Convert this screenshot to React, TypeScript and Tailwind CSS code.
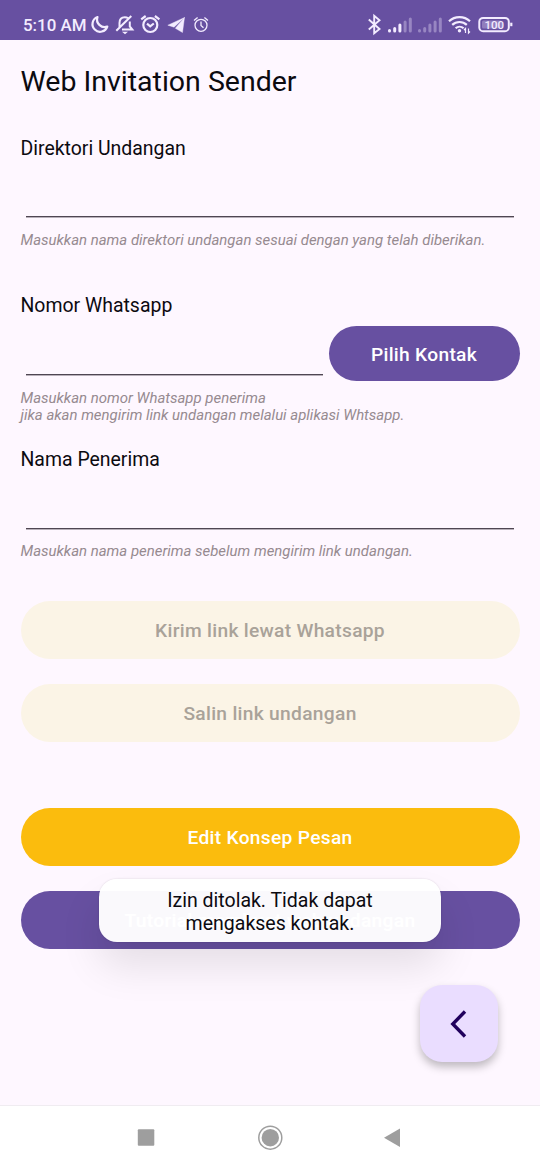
import React from "react";

function StatusBar() {
  return (
    <header className="flex h-10 shrink-0 bg-[#6750a1] text-[#f3ecff]">
      <div className="flex flex-1 pl-[23px]">
        <span className="w-[67px] pt-[15px] text-[16.900px] leading-5 font-medium whitespace-nowrap">5:10 AM</span>
        <svg className="shrink-0" width="120" height="40" viewBox="90 0 120 40" fill="none" stroke="currentColor" strokeWidth="2.200">
          <path d="M97.500 17a7.600 7.600 0 1 0 9.800 9.600 7.600 7.600 0 0 1-9.800-9.600Z" strokeLinejoin="round" />
          <path d="M119.500 27.500V23c0-3.500 2-5.800 5.300-5.800 1.400 0 2.500.4 3.400 1.100M129.800 21.500v5l2.500 3.100H122M116.300 30.800 131.300 16" strokeWidth="2" />
          <path d="M122 31.800h6l-3 2.400Z" fill="currentColor" stroke="none" />
          <circle cx="150.300" cy="25" r="7" />
          <path d="m147 23.700 3.200 2.600 3.600-2.800M141.200 19.400l4.500-3.400M159.400 19.400l-4.500-3.400" />
          <path d="m167.800 25.200 16.700-7.700-10.500 9.700ZM184.500 17.500l-2 15-7.200-4.200Z" fill="currentColor" strokeWidth=".4" />
          <g strokeWidth="1.300">
            <circle cx="201" cy="25.300" r="6" />
            <path d="M201 21.500v4l2.500 2.300M194 20.500l3.600-3M208 20.500l-3.600-3" />
          </g>
        </svg>
      </div>
      <svg className="w-[160px] shrink-0" height="40" viewBox="360 0 160 40" fill="none" stroke="currentColor" strokeWidth="2">
        <path d="m368.800 19.500 10.700 9.500-5.300 4.200V15.800l5.300 4.400-10.700 9.300" strokeWidth="1.900" />
        <g strokeWidth="3" strokeLinecap="round">
          <path d="M389.500 31v-.5M394.700 31v-2.500M399.900 31v-6" />
          <path d="M405.100 31v-9M410.300 31V19M419.500 31v-.5M424.700 31v-2.500M429.900 31v-6M435.100 31v-9M440.300 31V19" opacity=".35" />
        </g>
        <path d="M449 21.200a15.500 15.500 0 0 1 21 0M452.200 24.900a10.600 10.600 0 0 1 14.600 0M455.600 28.300a5.900 5.900 0 0 1 8 0" strokeWidth="2.200" />
        <circle cx="459.500" cy="30.800" r="1.700" fill="currentColor" stroke="none" />
        <path d="M465.500 33v-4.500l-1.500 1.500M468.500 28.500V33l1.500-1.500" strokeWidth="1.200" />
        <rect x="479.300" y="17.900" width="29.500" height="13.300" rx="3.800" />
        <rect x="482" y="20.500" width="20" height="8" rx="1.500" fill="currentColor" stroke="none" opacity=".3" />
        <path d="M511.300 22.700v3.500" strokeWidth="2.200" />
        <text x="494.300" y="28.700" textAnchor="middle" fontSize="11.500" fontWeight="500" fill="currentColor" stroke="none">100</text>
      </svg>
      <div className="w-5 shrink-0" />
    </header>
  );
}

function Label({ children }: { children: React.ReactNode }) {
  return <label className="h-6 text-[19.450px] leading-6 whitespace-nowrap">{children}</label>;
}

function Hint({ children }: { children: React.ReactNode }) {
  return <p className="text-[14.940px] leading-[17.500px] whitespace-nowrap text-[#968a90] italic">{children}</p>;
}

function Pill({ tone, children }: { tone: string; children: React.ReactNode }) {
  return (
    <button className={`flex h-[58px] w-full shrink-0 items-center justify-center rounded-full pt-0.5 text-[19.200px] font-medium tracking-[0.300px] whitespace-nowrap ${tone}`}>
      {children}
    </button>
  );
}

function NavigationBar() {
  return (
    <nav className="flex h-[65px] shrink-0 border-t border-[#f0ecf1] bg-white">
      <svg width="540" height="64" viewBox="0 1106 540 64" fill="#9e9e9e">
        <rect x="137.800" y="1129.300" width="16.500" height="16.500" rx="1" />
        <circle cx="270.300" cy="1137.700" r="8.700" />
        <circle cx="270.300" cy="1137.700" r="11.500" fill="none" stroke="#9e9e9e" strokeWidth="1.500" />
        <path d="M384 1137.700 400 1128.500v18.500Z" />
      </svg>
    </nav>
  );
}

export default function App() {
  return (
    <div className="relative flex h-[1170px] w-[540px] flex-col overflow-hidden bg-[#fef7ff] font-[Roboto,sans-serif] text-[#0c0a10]">
      <StatusBar />
      <main className="flex flex-1 flex-col px-[20.500px] pt-[24px]">
        <h1 className="h-9 text-[28.500px] leading-9 whitespace-nowrap">Web Invitation Sender</h1>
        <div className="mt-[37px] flex flex-col">
          <Label>Direktori Undangan</Label>
          <input className="mr-[6px] ml-[5px] h-[56px] border-b border-[#4f4653] shadow-[0_1px_0_rgba(79,70,83,0.4)] outline-none" />
          <div className="mt-[15px] h-[18px]"><Hint>Masukkan nama direktori undangan sesuai dengan yang telah diberikan.</Hint></div>
        </div>
        <div className="mt-[44px] flex flex-col">
          <Label>Nomor Whatsapp</Label>
          <div className="mt-[8px] flex h-[55px]">
            <input className="mr-[6px] ml-[5px] h-[49px] w-[297px] border-b border-[#4f4653] shadow-[0_1px_0_rgba(79,70,83,0.4)] outline-none" />
            <button className="h-[55px] w-[191px] shrink-0 rounded-full bg-[#6750a1] pt-[3px] text-[19.200px] font-medium tracking-[0.300px] text-white">Pilih Kontak</button>
          </div>
          <div className="mt-[8.500px]"><Hint>Masukkan nomor Whatsapp penerima<br />jika akan mengirim link undangan melalui aplikasi Whtsapp.</Hint></div>
        </div>
        <div className="mt-[23.500px] flex flex-col">
          <Label>Nama Penerima</Label>
          <input className="mr-[6px] ml-[5px] h-[57px] border-b border-[#4f4653] shadow-[0_1px_0_rgba(79,70,83,0.4)] outline-none" />
          <div className="mt-[14px] h-[18px]"><Hint>Masukkan nama penerima sebelum mengirim link undangan.</Hint></div>
        </div>
        <div className="mt-[40px] flex flex-col gap-[25px]">
          <Pill tone="bg-[#fbf4e6] text-[#a9a299]">Kirim link lewat Whatsapp</Pill>
          <Pill tone="bg-[#fbf4e6] text-[#a9a299]">Salin link undangan</Pill>
        </div>
        <div className="mt-[66px] flex flex-col gap-[25px]">
          <Pill tone="bg-[#fbbc0d] text-white">Edit Konsep Pesan</Pill>
          <Pill tone="bg-[#6750a1] text-white">Tutorial membuat web undangan</Pill>
        </div>
      </main>
      <NavigationBar />
      <div role="status" className="absolute top-[879px] left-[99px] flex h-[63px] w-[342px] items-center justify-center rounded-[18px] bg-white/97 pt-0.5 text-center text-[19.500px] leading-[23px] shadow-[0_24px_40px_rgba(0,0,0,0.10),0_0_2px_rgba(0,0,0,0.15)]">
        <span>Izin ditolak. Tidak dapat<br />mengakses kontak.</span>
      </div>
      <button aria-label="Kembali" className="absolute top-[985px] left-[420px] flex h-[77px] w-[78px] items-center justify-center rounded-[22px] bg-[#eaddff] shadow-[0_5px_8px_rgba(0,0,0,0.25)]">
        <svg width="20" height="30" viewBox="1 0 20 30" fill="none" stroke="#21005d" strokeWidth="3.400">
          <path d="M17 2.500 4.800 15 17 27.500" />
        </svg>
      </button>
    </div>
  );
}
